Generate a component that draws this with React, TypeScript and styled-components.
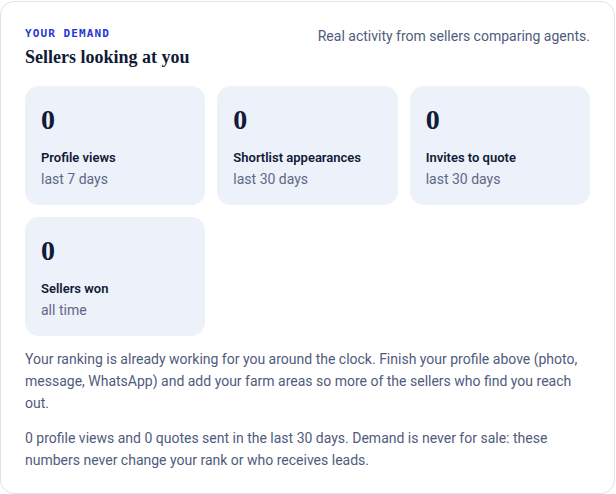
import styled, { createGlobalStyle } from "styled-components"

const GlobalStyle = createGlobalStyle`
  html, body {
    margin: 0;
    padding: 0;
    background: #ffffff;
  }
  body {
    font-family: Roboto, "Liberation Sans", sans-serif;
    -webkit-font-smoothing: antialiased;
  }
`

const stats = [
  { value: 0, label: "Profile views", period: "last 7 days" },
  { value: 0, label: "Shortlist appearances", period: "last 30 days" },
  { value: 0, label: "Invites to quote", period: "last 30 days" },
  { value: 0, label: "Sellers won", period: "all time" },
]

export default function App() {
  return (
    <>
      <GlobalStyle />
      <Page>
        <Card>
          <Header>
            <div>
              <Eyebrow>Your demand</Eyebrow>
              <Title>Sellers looking at you</Title>
            </div>
            <Caption>Real activity from sellers comparing agents.</Caption>
          </Header>
          <StatGrid>
            {stats.map((s) => (
              <StatCard key={s.label}>
                <StatValue>{s.value}</StatValue>
                <StatLabel>{s.label}</StatLabel>
                <StatPeriod>{s.period}</StatPeriod>
              </StatCard>
            ))}
          </StatGrid>
          <Body>
            Your ranking is already working for you around the clock. Finish your
            profile above (photo, message, WhatsApp) and add your farm areas so more
            of the sellers who find you reach out.
          </Body>
          <Body>
            0 profile views and 0 quotes sent in the last 30 days. Demand is never
            for sale: these numbers never change your rank or who receives leads.
          </Body>
        </Card>
      </Page>
    </>
  )
}

const Page = styled.div`
  padding: 1px 1px 1px 0;
`
const Card = styled.section`
  box-sizing: border-box;
  width: 615px;
  min-height: 492px;
  border: 1px solid #dde1ea;
  border-radius: 14px;
  padding: 24px 24px 22px;
  background: #ffffff;
`
const Header = styled.div`
  display: flex;
  justify-content: space-between;
  align-items: flex-start;
  margin-bottom: 18px;
`
const Eyebrow = styled.div`
  font-family: "DejaVu Sans Mono", "Liberation Mono", monospace;
  font-size: 11px;
  font-weight: 700;
  letter-spacing: 0.1em;
  text-transform: uppercase;
  color: #2536d9;
  line-height: 16px;
`
const Title = styled.h2`
  margin: 4px 0 0;
  font-family: "Liberation Serif", serif;
  font-size: 18px;
  font-weight: 700;
  color: #111a36;
  line-height: 22px;
`
const Caption = styled.p`
  margin: 0;
  font-size: 14px;
  color: #4f5b7c;
  line-height: 20px;
`
const StatGrid = styled.div`
  display: grid;
  grid-template-columns: repeat(3, 1fr);
  gap: 12px;
  margin-bottom: 12px;
`
const StatCard = styled.div`
  background: #edf1fa;
  border-radius: 14px;
  padding: 18px 16px 0;
  height: 119px;
  box-sizing: border-box;
`
const StatValue = styled.div`
  font-family: "Liberation Serif", serif;
  font-size: 28px;
  font-weight: 700;
  color: #111a36;
  line-height: 32px;
  margin-bottom: 13px;
`
const StatLabel = styled.div`
  font-size: 13px;
  font-weight: 600;
  color: #111a36;
  line-height: 18px;
`
const StatPeriod = styled.div`
  margin-top: 2px;
  font-size: 14px;
  color: #5d6886;
  line-height: 20px;
`
const Body = styled.p`
  margin: 0 0 13px;
  font-size: 14px;
  line-height: 22px;
  color: #4f5b7c;
  &:last-child {
    margin-bottom: 0;
  }
`
